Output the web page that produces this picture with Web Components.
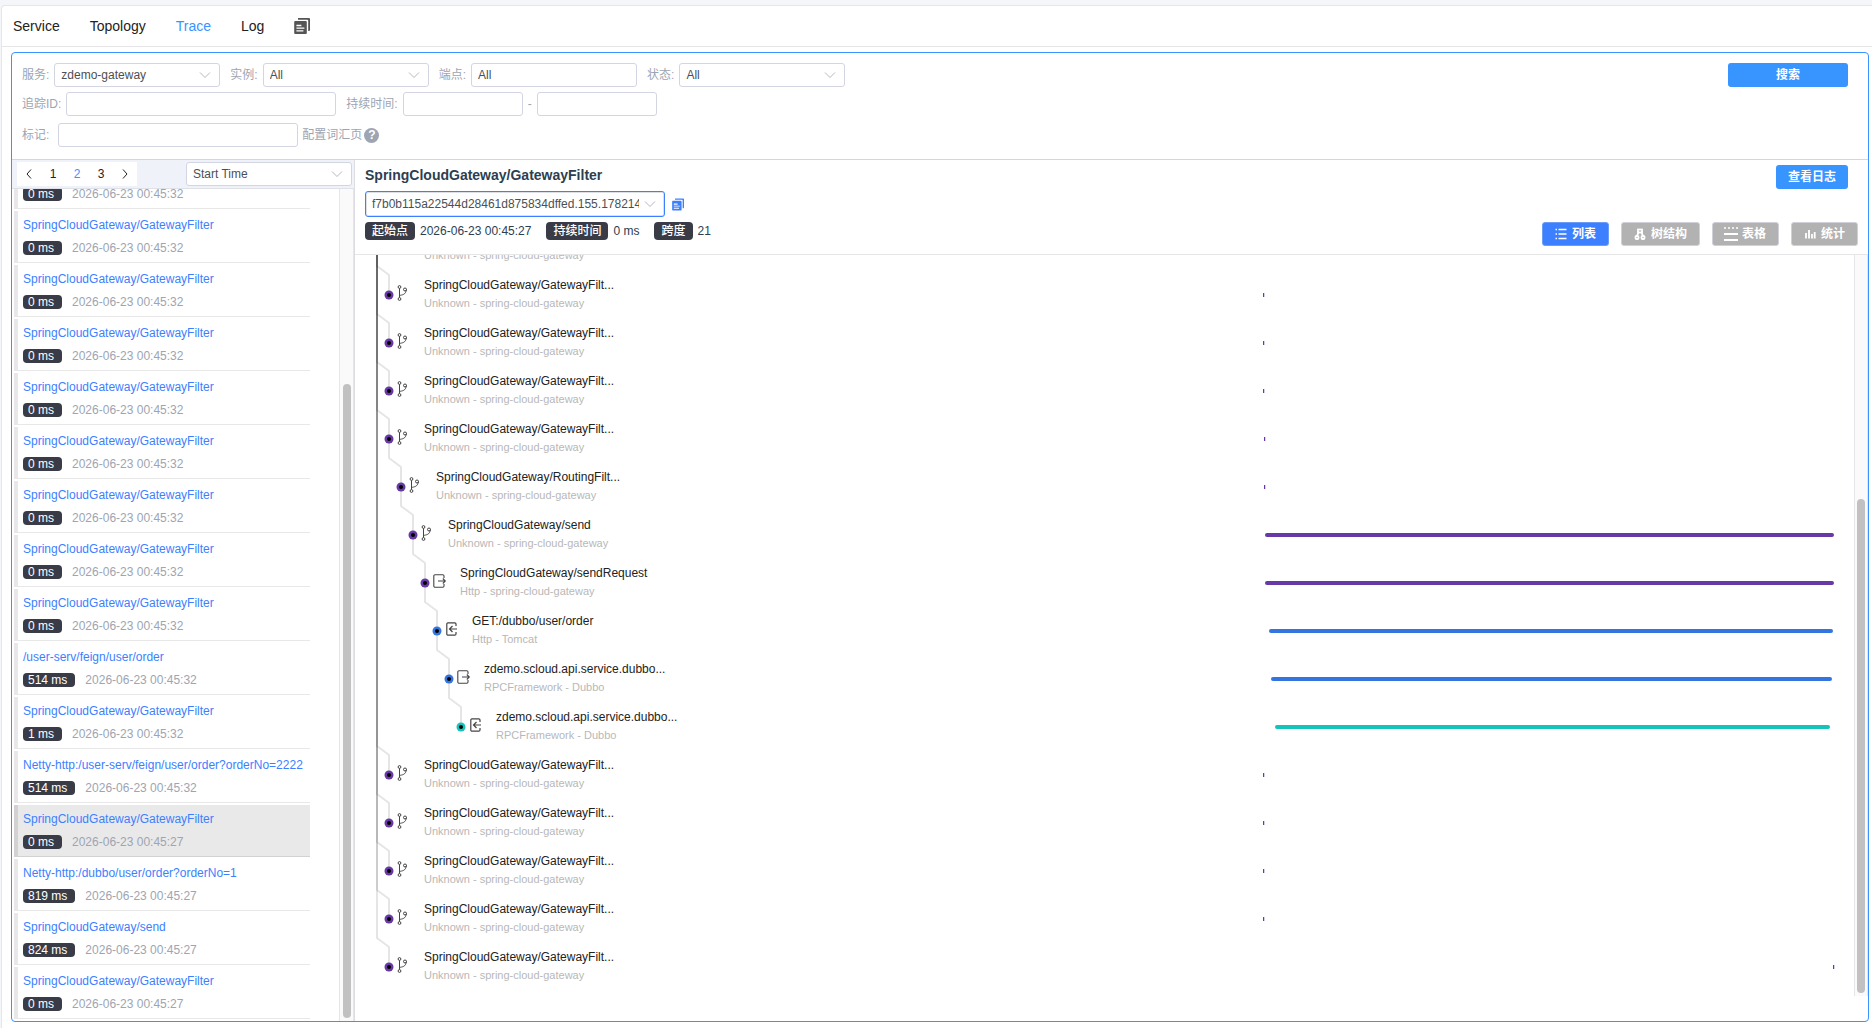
<!DOCTYPE html>
<html lang="zh-CN">
<head>
<meta charset="utf-8">
<title>Trace</title>
<style>
  html, body {
    margin: 0;
    height: 100%;
  }

  body {
    background: #f5f6f9;
    color: #2c3e50;
    font: 12px/18px "Liberation Sans", "Noto Sans CJK SC", sans-serif;
  }
</style>
</head>
<body>
<trace-page></trace-page>

<script>
const PURPLE = '#6639a6';
const BLUE = '#3274e0';
const TEAL = '#14c4ba';

const ICONS = {
  copy: `<svg viewBox="0 0 16 16" fill="currentColor">
    <path d="M4 0h11a1 1 0 0 1 1 1v11a1 1 0 0 1-1 1h-.8V2.6a.8.8 0 0 0-.8-.8H4z"/>
    <path fill-rule="evenodd" d="M1.2 3h10.6a1 1 0 0 1 1 1v11a1 1 0 0 1-1 1H1.2a1 1 0 0 1-1-1V4a1 1 0 0 1 1-1zM2.4 6.8v1.4h5V6.8zM2.4 9.6v1.2h8V9.6zM2.4 12.2v1.3h7v-1.3z"/></svg>`,
  list: `<svg viewBox="0 0 12 12" stroke="currentColor" stroke-width="1.4">
    <path d="M3.5 1.5H11.5M3.5 6H11.5M3.5 10.5H11.5"/><path d="M.5 1.5H2M.5 6H2M.5 10.5H2"/></svg>`,
  tree: `<svg viewBox="0 0 12 12" fill="none" stroke="currentColor" stroke-width="1.8">
    <rect x="4" y="1.5" width="4" height="3"/><rect x="1.5" y="8" width="3" height="3" rx="1"/><rect x="7.5" y="8" width="3" height="3" rx="1"/><path d="M4.5 4.5L3 8M7.5 4.5L9 8"/></svg>`,
  table: `<svg viewBox="0 0 12 12" stroke="currentColor" stroke-width="2">
    <path d="M-1 0h2M3 0h2M7 0h2M11 0h2" stroke-width="1.5"/><path d="M-1 6H13M-1 12H13"/></svg>`,
  stats: `<svg viewBox="0 0 12 12" stroke="currentColor" stroke-width="1.8">
    <path d="M2 10.5V5M5 10.5V2M8 10.5V6M10.7 10.5V4"/></svg>`,
  local: `<svg viewBox="0 0 11 16" fill="none" stroke="#444" stroke-width="1">
    <circle cx="2.5" cy="2" r="1.4"/><circle cx="2.5" cy="14" r="1.4"/><circle cx="8" cy="4.500" r="1.500"/>
    <path d="M2.5 3.4V12.6M2.5 10.5C5 9.8 8.8 10 9.4 4.5"/></svg>`,
  exit: `<svg viewBox="0 0 13 14" fill="none" stroke="#444" stroke-width="1.1">
    <path d="M11 4V2A1.200 1.200 0 0 0 9.800.8H2A1.200 1.200 0 0 0 .8 2v10A1.200 1.200 0 0 0 2 13.200h7.800A1.200 1.200 0 0 0 11 12v-2"/><path d="M5 7h7.300M9.800 4.500L12.300 7 9.800 9.500"/></svg>`,
  entry: `<svg viewBox="0 0 13 14" fill="none" stroke="#444" stroke-width="1.2">
    <path d="M11 4V2A1.200 1.200 0 0 0 9.800.8H3A1.200 1.200 0 0 0 1.800 2v10A1.200 1.200 0 0 0 3 13.200h6.800A1.200 1.200 0 0 0 11 12v-2"/><path d="M12 7H4.500M7.500 4L4.500 7l3 3"/></svg>`
};

class TraceIcon extends HTMLElement {
  constructor() {
    super();
    this.attachShadow({ mode: 'open' });
  }

  connectedCallback() {
    this.shadowRoot.innerHTML = `
      <style>
        :host { display: block; flex: none; }
        svg { display: block; width: 100%; height: 100%; overflow: visible; }
      </style>
      ${ICONS[this.getAttribute('name')]}
    `;
  }
}
customElements.define('trace-icon', TraceIcon);

// Labelled text box or drop-down. --field-width sets the width of the control.
class TraceField extends HTMLElement {
  constructor() {
    super();
    this.attachShadow({ mode: 'open' });
  }

  connectedCallback() {
    const label = this.getAttribute('label') || '';
    const name = this.getAttribute('name') || label;
    const value = this.getAttribute('value') || '';
    const isSelect = this.getAttribute('type') === 'select';
    const control = isSelect
      ? `<select id="control" aria-label="${name}"><option>${value}</option></select>
         <svg viewBox="0 0 10 6" fill="none" stroke="#b4b8c0"><path d="M0 .5L5 5.5 10 .5"/></svg>`
      : `<input id="control" type="text" aria-label="${name}" value="${value}">`;

    this.shadowRoot.innerHTML = `
      <style>
        :host {
          display: flex;
          align-items: center;
          gap: 5px;
          color: #9da5b2;
          white-space: nowrap;
        }

        .box {
          position: relative;
          width: var(--field-width, 166px);
        }

        input,
        select {
          display: block;
          box-sizing: border-box;
          width: 100%;
          height: 24px;
          margin: 0;
          padding: 0 25px 0 6px;
          appearance: none;
          border: 1px solid #d4d5e2;
          border-radius: 3px;
          background: #fff;
          color: #4c4f55;
          font: inherit;
          outline: none;
        }

        :host([active]) select {
          height: 26px;
          border-color: #3d80ff;
          box-shadow: inset 0 0 0 1px #dcdfe6;
        }

        svg {
          position: absolute;
          right: 10px;
          top: calc(50% - 3px);
          width: 10px;
          height: 6px;
          overflow: visible;
          pointer-events: none;
        }
      </style>
      ${label ? `<label for="control">${label}</label>` : ''}
      <div class="box">${control}</div>
    `;
  }
}
customElements.define('trace-field', TraceField);

class TraceButton extends HTMLElement {
  constructor() {
    super();
    this.attachShadow({ mode: 'open' }).innerHTML = `
      <style>
        :host { display: block; flex: none; }

        button {
          display: flex;
          align-items: center;
          justify-content: center;
          gap: 5px;
          box-sizing: border-box;
          width: 100%;
          height: 24px;
          padding: 0 12px;
          border: 0;
          border-radius: 3px;
          background: #3894ff;
          color: #fff;
          font: inherit;
          font-weight: 600;
          white-space: nowrap;
        }

        :host([tab]) button {
          border: 1px solid #cfd0d8;
          background: #b2b2b2;
        }

        :host([tab][selected]) button {
          border-color: #6c9cf5;
          background: #3d80ff;
        }
      </style>
      <button type="button"><slot name="icon"></slot><slot></slot></button>
    `;
  }
}
customElements.define('trace-button', TraceButton);

class TraceNav extends HTMLElement {
  constructor() {
    super();
    this.attachShadow({ mode: 'open' }).innerHTML = `
      <style>
        :host {
          display: block;
          border-bottom: 1px solid #e6e6e8;
        }

        nav {
          display: flex;
          align-items: center;
          gap: 30px;
          height: 40px;
          padding: 0 11px;
          font-size: 14px;
        }

        a {
          color: #222;
          text-decoration: none;
        }

        a.active { color: #3894ff; }

        .copy { color: #555; }

        trace-icon { width: 16px; height: 16px; }
      </style>
      <nav>
        <a href="#service">Service</a>
        <a href="#topology">Topology</a>
        <a href="#trace" class="active">Trace</a>
        <a href="#log">Log</a>
        <a href="#copy" class="copy" aria-label="Copy"><trace-icon name="copy"></trace-icon></a>
      </nav>
    `;
  }
}
customElements.define('trace-nav', TraceNav);

class TraceFilter extends HTMLElement {
  constructor() {
    super();
    this.attachShadow({ mode: 'open' }).innerHTML = `
      <style>
        :host {
          display: block;
          flex: none;
          padding: 10px 20px 12px 10px;
          border-bottom: 1px solid #d4d5e2;
        }

        .row {
          display: flex;
          align-items: center;
          gap: 10px;
        }

        .row + .row { margin-top: 5px; }
        .row.tags { gap: 4px; margin-top: 7px; }

        .range {
          display: flex;
          align-items: center;
          gap: 5px;
          color: #9da5b2;
        }

        .range trace-field { --field-width: 120px; }
        .trace-id { --field-width: 270px; }
        .tag { --field-width: 240px; gap: 9px; }

        trace-button {
          width: 120px;
          margin-left: auto;
        }

        a {
          display: flex;
          align-items: center;
          gap: 2px;
          color: #9da5b2;
          text-decoration: none;
        }

        .help {
          width: 15px;
          border-radius: 50%;
          background: #9da5b2;
          color: #fff;
          font-weight: bold;
          line-height: 15px;
          text-align: center;
        }
      </style>
      <div class="row">
        <trace-field type="select" label="服务:" value="zdemo-gateway"></trace-field>
        <trace-field type="select" label="实例:" value="All"></trace-field>
        <trace-field label="端点:" value="All"></trace-field>
        <trace-field type="select" label="状态:" value="All"></trace-field>
        <trace-button>搜索</trace-button>
      </div>
      <div class="row">
        <trace-field class="trace-id" label="追踪ID:"></trace-field>
        <div class="range">
          <trace-field label="持续时间:"></trace-field>
          <span>-</span>
          <trace-field name="max"></trace-field>
        </div>
      </div>
      <div class="row tags">
        <trace-field class="tag" label="标记:"></trace-field>
        <a href="#tags">配置词汇页<span class="help">?</span></a>
      </div>
    `;
  }
}
customElements.define('trace-filter', TraceFilter);

class TraceScrollbar extends HTMLElement {
  constructor() {
    super();
    this.attachShadow({ mode: 'open' }).innerHTML = `
      <style>
        :host {
          display: flex;
          flex: none;
          flex-direction: column;
          justify-content: flex-end;
          align-items: center;
          box-sizing: border-box;
          width: 15px;
          padding-bottom: 3px;
          border: solid #e6e6e8;
          border-width: 0 1px;
          background: #fafafa;
        }

        .thumb {
          width: 8px;
          height: var(--thumb);
          border-radius: 4px;
          background: #c1c1c1;
        }
      </style>
      <div class="thumb"></div>
    `;
  }
}
customElements.define('trace-scrollbar', TraceScrollbar);

const FILTER = 'SpringCloudGateway/GatewayFilter';
const traces = [
  ['', '0 ms', '32'],
  ...Array(8).fill([FILTER, '0 ms', '32']),
  ['/user-serv/feign/user/order', '514 ms', '32'],
  [FILTER, '1 ms', '32'],
  ['Netty-http:/user-serv/feign/user/order?orderNo=2222', '514 ms', '32'],
  [FILTER, '0 ms', '27', true],
  ['Netty-http:/dubbo/user/order?orderNo=1', '819 ms', '27'],
  ['SpringCloudGateway/send', '824 ms', '27'],
  [FILTER, '0 ms', '27']
];

class TraceList extends HTMLElement {
  constructor() {
    super();
    this.attachShadow({ mode: 'open' }).innerHTML = `
      <style>
        :host {
          display: flex;
          flex: none;
          flex-direction: column;
          box-sizing: border-box;
          width: 343px;
          min-height: 0;
          border-right: 1px solid #dcdce2;
        }

        header {
          display: flex;
          flex: none;
          align-items: center;
          justify-content: space-between;
          height: 28px;
          padding-left: 5px;
          padding-right: 2px;
          border-bottom: 1px solid #dfe0e8;
          background: #f0f2f9;
        }

        .pager { display: flex; background: #fff; }

        .pager button {
          width: 24px;
          height: 24px;
          padding: 0;
          border: 0;
          background: none;
          color: #222;
          font: inherit;
        }

        .pager .current { color: #3894ff; }

        .pager svg {
          display: block;
          width: 6px;
          height: 10px;
          margin: auto;
        }

        .body {
          display: flex;
          flex: 1;
          min-height: 0;
        }

        /* scrolled to the end */
        ul {
          display: flex;
          flex: 1;
          flex-direction: column;
          justify-content: flex-end;
          gap: 2px;
          margin: 0;
          padding: 0 29px 2px 2px;
          overflow: hidden;
          list-style: none;
        }

        li {
          flex: none;
          box-sizing: border-box;
          height: 52px;
          padding: 4px 5px;
          border-left: 4px solid #e8e8e8;
          border-bottom: 1px solid #e8e8e8;
          white-space: nowrap;
        }

        li.selected {
          border-color: #d2d2d2;
          background: #e9e9e9;
        }

        a {
          display: block;
          height: 20px;
          color: #3d80ff;
          line-height: 20px;
          text-decoration: none;
        }

        .meta {
          display: flex;
          gap: 10px;
          margin-top: 6px;
          color: #9da5b2;
          line-height: 14px;
        }

        .badge {
          padding: 0 8px 0 5px;
          border-radius: 4px;
          background: #393c47;
          color: #fff;
        }

        trace-scrollbar { --thumb: 76.5%; }
      </style>
      <header>
        <div class="pager">
          <button type="button" aria-label="Previous"><svg viewBox="0 0 6 10" fill="none" stroke="#222"><path d="M5 .5L1 5l4 4.5"/></svg></button>
          <button type="button">1</button>
          <button type="button" class="current">2</button>
          <button type="button">3</button>
          <button type="button" aria-label="Next"><svg viewBox="0 0 6 10" fill="none" stroke="#222"><path d="M1 .5L5 5 1 9.5"/></svg></button>
        </div>
        <trace-field type="select" name="Sort" value="Start Time"></trace-field>
      </header>
      <div class="body">
        <ul>
          ${traces.map(([name, duration, sec, selected]) => `
            <li class="${selected ? 'selected' : ''}">
              <a href="#trace">${name}</a>
              <div class="meta"><span class="badge">${duration}</span><span>2026-06-23 00:45:${sec}</span></div>
            </li>`).join('')}
        </ul>
        <trace-scrollbar></trace-scrollbar>
      </div>
    `;
  }
}
customElements.define('trace-list', TraceList);

class TraceHeader extends HTMLElement {
  constructor() {
    super();
    this.attachShadow({ mode: 'open' }).innerHTML = `
      <style>
        :host {
          display: flex;
          flex: none;
          justify-content: space-between;
          padding: 5px 10px 8px;
          border-bottom: 1px solid #e6e6e8;
        }

        h5 {
          margin: 0 0 6px;
          font-size: 14px;
          line-height: 20px;
        }

        .id,
        .facts,
        .tabs {
          display: flex;
          align-items: center;
        }

        .id {
          gap: 7px;
          margin-bottom: 5px;
          color: #3d80ff;
        }

        .id trace-field { --field-width: 300px; }
        .id trace-icon { width: 12px; height: 13px; }

        .facts {
          gap: 5px;
          margin-bottom: 6px;
        }

        .facts b {
          padding: 0 7px;
          border-radius: 4px;
          background: #393c47;
          color: #fff;
          font-weight: 500;
        }

        .facts span { margin-right: 10px; }

        .side {
          display: flex;
          flex-direction: column;
          align-items: flex-end;
          justify-content: space-between;
        }

        .log { margin-right: 10px; width: 72px; }
        .tabs { gap: 12px; }
        .tabs trace-icon { width: 12px; height: 12px; }
      </style>
      <div>
        <h5>SpringCloudGateway/GatewayFilter</h5>
        <div class="id">
          <trace-field active type="select" name="Trace ID" value="f7b0b115a22544d28461d875834dffed.155.17821471"></trace-field>
          <trace-icon name="copy"></trace-icon>
        </div>
        <div class="facts">
          <b>起始点</b><span>2026-06-23 00:45:27</span>
          <b>持续时间</b><span>0 ms</span>
          <b>跨度</b><span>21</span>
        </div>
      </div>
      <div class="side">
        <trace-button class="log">查看日志</trace-button>
        <div class="tabs">
          <trace-button tab selected><trace-icon slot="icon" name="list"></trace-icon>列表</trace-button>
          <trace-button tab><trace-icon slot="icon" name="tree"></trace-icon>树结构</trace-button>
          <trace-button tab><trace-icon slot="icon" name="table"></trace-icon>表格</trace-button>
          <trace-button tab><trace-icon slot="icon" name="stats"></trace-icon>统计</trace-button>
        </div>
      </div>
    `;
  }
}
customElements.define('trace-header', TraceHeader);

const span = (depth, name, info, icon, color, start, size) => ({ depth, name, info, icon, color, start, size });
const local = (depth, name, start, size) =>
  span(depth, name, 'Unknown - spring-cloud-gateway', 'local', PURPLE, start, size);
const gateway = (start) => local(1, 'SpringCloudGateway/GatewayFilt...', start, 0);

// start and size are percentages of the timeline
const spans = [
  local(1, '&nbsp;', 0, 0),
  gateway(0),
  gateway(0),
  gateway(0),
  gateway(0.2),
  local(2, 'SpringCloudGateway/RoutingFilt...', 0.2, 0),
  local(3, 'SpringCloudGateway/send', 0.4, 99.6),
  span(4, 'SpringCloudGateway/sendRequest', 'Http - spring-cloud-gateway', 'exit', PURPLE, 0.4, 99.6),
  span(5, 'GET:/dubbo/user/order', 'Http - Tomcat', 'entry', BLUE, 1.1, 98.8),
  span(6, 'zdemo.scloud.api.service.dubbo...', 'RPCFramework - Dubbo', 'exit', BLUE, 1.4, 98.3),
  span(7, 'zdemo.scloud.api.service.dubbo...', 'RPCFramework - Dubbo', 'entry', TEAL, 2.1, 97.2),
  gateway(0.1),
  gateway(0.1),
  gateway(0.1),
  gateway(0.1),
  gateway(99.8)
];

const ROW = 48;
const INDENT = 12;

class TraceTree extends HTMLElement {
  constructor() {
    super();
    this.attachShadow({ mode: 'open' }).innerHTML = `
      <style>
        :host {
          display: flex;
          flex: 1;
          min-height: 0;
          margin-bottom: 25px;
        }

        /* scrolled to the end */
        .view {
          display: flex;
          flex: 1;
          flex-direction: column;
          justify-content: flex-end;
          overflow: hidden;
          padding-bottom: 5px;
        }

        .spans {
          position: relative;
          flex: none;
        }

        .lines {
          position: absolute;
          left: 22px;
          top: 0;
          width: 100px;
          height: 100%;
          overflow: visible;
        }

        .row {
          display: flex;
          align-items: center;
          height: ${ROW}px;
        }

        .row trace-icon {
          width: 13px;
          height: 14px;
          margin: 0 14px 4px 0;
        }

        .row trace-icon[name="local"] {
          width: 11px;
          height: 16px;
          margin-right: 16px;
        }

        .text {
          flex: 1;
          margin-bottom: 2px;
          white-space: nowrap;
        }

        .name { color: #222; }

        .info {
          color: #b8b8b8;
          font-size: 11px;
        }

        .timeline {
          flex: 0 0 38.1%;
          margin-right: 20px;
        }

        .bar {
          height: 4px;
          border-radius: 2px;
        }

        .bar.tick {
          min-width: 1px;
          border-radius: 0;
          box-shadow: 1px 0 #6639a640;
        }

        trace-scrollbar {
          --thumb: 67%;
          width: 14px;
        }
      </style>
      <div class="view">
        <div class="spans">
          ${this.lines()}
          ${spans.map((s) => this.row(s)).join('')}
        </div>
      </div>
      <trace-scrollbar></trace-scrollbar>
    `;
  }

  // A connector runs down from the parent and steps aside to the child's dot.
  lines() {
    const paths = [];
    const dots = [];
    const lastAt = [0];
    spans.forEach((s, i) => {
      const x = s.depth * INDENT;
      const y = i * ROW + ROW / 2;
      paths.push(`<path d="M${x - INDENT} ${lastAt[s.depth - 1]}V${y - 29}L${x} ${y - 20}V${y}"/>`);
      dots.push(`<circle cx="${x}" cy="${y}" r="4.5" fill="${s.color}"/><circle cx="${x}" cy="${y}" r="2"/>`);
      lastAt[s.depth] = y;
    });
    return `<svg class="lines"><g fill="none" stroke="#000" stroke-opacity=".1" stroke-width="2">${paths.join('')}</g>${dots.join('')}</svg>`;
  }

  row(s) {
    return `
      <div class="row">
        <trace-icon name="${s.icon}" style="margin-left: ${30 + s.depth * INDENT}px"></trace-icon>
        <div class="text">
          <div class="name">${s.name}</div>
          <div class="info">${s.info}</div>
        </div>
        <div class="timeline">
          <div class="bar ${s.size ? '' : 'tick'}" style="margin-left: ${s.start}%; width: ${s.size}%; background: ${s.color}"></div>
        </div>
      </div>`;
  }
}
customElements.define('trace-tree', TraceTree);

class TracePage extends HTMLElement {
  constructor() {
    super();
    this.attachShadow({ mode: 'open' }).innerHTML = `
      <style>
        :host {
          display: flex;
          box-sizing: border-box;
          height: 100vh;
          padding: 5px 0 0 1px;
        }

        .card {
          display: flex;
          flex: 1;
          flex-direction: column;
          min-width: 0;
          border: solid #e6e6e8;
          border-width: 1px 0 0 1px;
          border-radius: 4px 0 0 0;
          background: #fff;
        }

        .widget {
          display: flex;
          flex: 1;
          flex-direction: column;
          min-height: 0;
          margin: 5px 3px 6px 9px;
          border: 1px solid #3894ff;
          border-radius: 4px;
        }

        .columns {
          display: flex;
          flex: 1;
          min-height: 0;
        }

        main {
          display: flex;
          flex: 1;
          flex-direction: column;
          min-width: 0;
        }
      </style>
      <div class="card">
        <trace-nav></trace-nav>
        <div class="widget">
          <trace-filter></trace-filter>
          <div class="columns">
            <trace-list></trace-list>
            <main>
              <trace-header></trace-header>
              <trace-tree></trace-tree>
            </main>
          </div>
        </div>
      </div>
    `;
  }
}
customElements.define('trace-page', TracePage);
</script>
</body>
</html>
